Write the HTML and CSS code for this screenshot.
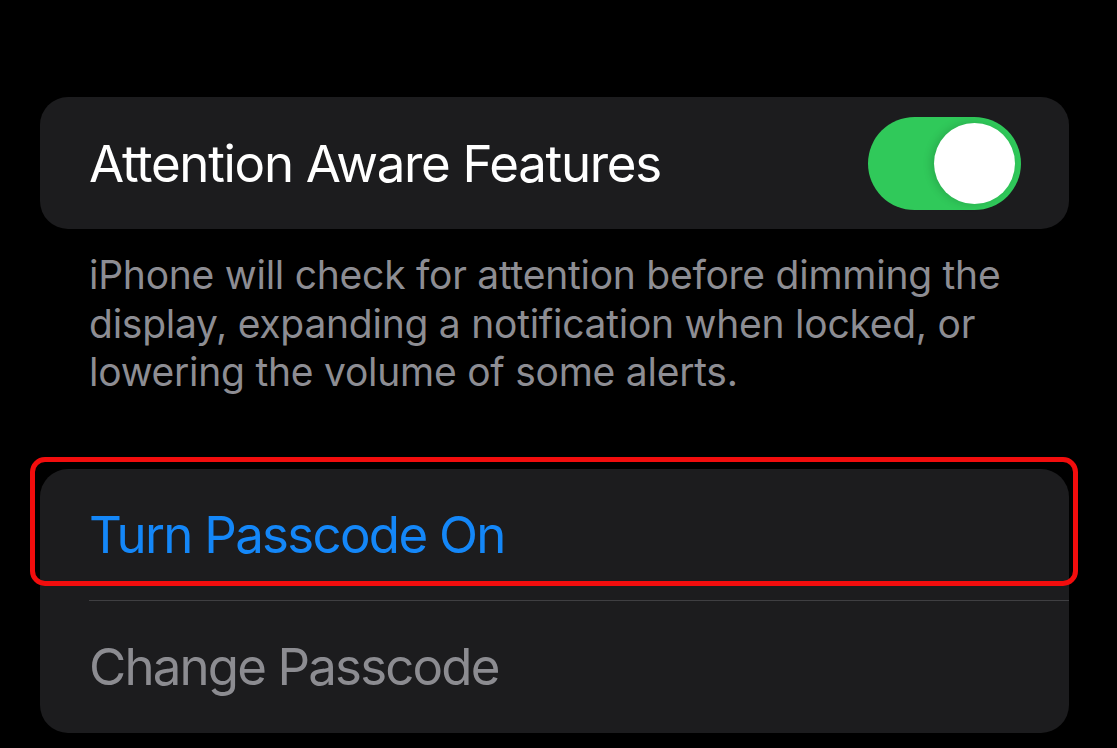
FILE: index.html
```html
<!DOCTYPE html>
<html lang="en">
<head>
<meta charset="utf-8">
<title>Passcode Settings</title>
<link rel="stylesheet" href="styles.css">
</head>
<body>
<main class="page">
  <section class="card">
    <div class="row row-toggle">
      <span class="label">Attention Aware Features</span>
      <span class="switch on" role="switch" aria-checked="true"><span class="knob"></span></span>
    </div>
  </section>
  <p class="footer">iPhone will check for attention before dimming the display, expanding a notification when locked, or lowering the volume of some alerts.</p>
  <section class="card card-passcode">
    <div class="row row-first">
      <span class="label link">Turn Passcode On</span>
      <span class="highlight" aria-hidden="true"></span>
    </div>
    <div class="row row-sep">
      <span class="label disabled">Change Passcode</span>
    </div>
  </section>
</main>
</body>
</html>
```

FILE: styles.css
```css
html, body {
  margin: 0;
  padding: 0;
  background: #000;
}

body {
  width: 1117px;
  height: 748px;
  overflow: hidden;
  font-family: Inter, "Noto Sans", "Liberation Sans", sans-serif;
  -webkit-font-smoothing: antialiased;
}

.page {
  padding: 97px 48px 0 40px;
}

.card {
  background: #1c1c1e;
  border-radius: 28px;
}

.row {
  position: relative;
  display: flex;
  align-items: center;
  justify-content: space-between;
  height: 132px;
  padding: 0 48px 0 49px;
  box-sizing: border-box;
}

.label {
  font-size: 51px;
  color: #ffffff;
  letter-spacing: -1.3px;
  white-space: nowrap;
}

.link {
  color: #1487f8;
  letter-spacing: -1.7px;
}

.disabled {
  color: #8c8c91;
  letter-spacing: -1.85px;
}

.switch {
  position: relative;
  display: block;
  width: 153px;
  height: 93px;
  border-radius: 47px;
  background: #30c95a;
}

.switch .knob {
  position: absolute;
  top: 6px;
  right: 6px;
  width: 81px;
  height: 81px;
  border-radius: 50%;
  background: #fff;
  box-shadow: -3px 0 8px rgba(0, 0, 0, 0.15);
}

.footer {
  margin: 0;
  padding: 22px 40px 0 49px;
  font-size: 39px;
  line-height: 48.5px;
  color: #8d8d93;
  letter-spacing: -0.25px;
}

.card-passcode {
  margin-top: 72px;
}

.row-first {
  height: 131px;
}

.row-sep {
  height: 133px;
  padding-right: 0;
}

.row-sep::before {
  content: "";
  position: absolute;
  top: 0;
  left: 49px;
  right: 0;
  height: 1px;
  background: #3f3f42;
}

.highlight {
  position: absolute;
  top: -12px;
  left: -10px;
  right: -9px;
  height: 129px;
  box-sizing: border-box;
  border: 5px solid #f20d0d;
  border-radius: 15px;
}
```
